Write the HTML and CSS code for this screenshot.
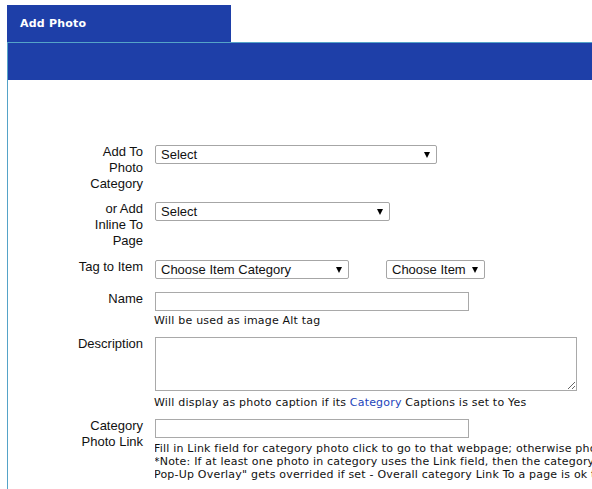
FILE: index.html
```html
<!DOCTYPE html>
<html>
<head>
<meta charset="utf-8">
<title>Add Photo</title>
<link rel="stylesheet" href="styles.css">
</head>
<body>
<div class="header">
  <div class="tab">Add Photo</div>
</div>
<div class="panel">
  <div class="bar"></div>
  <form class="form">
    <div class="row r1">
      <label class="label">Add To Photo Category</label>
      <div class="field">
        <div class="select w282"><span>Select</span><i class="arrow"></i></div>
      </div>
    </div>
    <div class="row r2">
      <label class="label">or Add Inline To Page</label>
      <div class="field">
        <div class="select w235"><span>Select</span><i class="arrow"></i></div>
      </div>
    </div>
    <div class="row r3">
      <label class="label">Tag to Item</label>
      <div class="field pair">
        <div class="select w194"><span>Choose Item Category</span><i class="arrow"></i></div>
        <div class="select w99"><span>Choose Item</span><i class="arrow"></i></div>
      </div>
    </div>
    <div class="row r4">
      <label class="label">Name</label>
      <div class="field">
        <input class="text" type="text">
        <div class="hint">Will be used as image Alt tag</div>
      </div>
    </div>
    <div class="row r5">
      <label class="label">Description</label>
      <div class="field">
        <textarea class="area"></textarea>
        <div class="hint h5">Will display as photo caption if its <a class="link" href="#">Category</a> Captions is set to Yes</div>
      </div>
    </div>
    <div class="row r6">
      <label class="label">Category Photo Link</label>
      <div class="field clip">
        <input class="text" type="text">
        <div class="hint long">Fill in Link field for category photo click to go to that webpage; otherwise photo opens in Pop-Up Overlay.<br>*Note: If at least one photo in category uses the Link field, then the category "Link To" setting of<br>Pop-Up Overlay" gets overrided if set - Overall category Link To a page is ok to use.</div>
      </div>
    </div>
  </form>
</div>
</body>
</html>
```
FILE: styles.css
```css
html, body {
  margin: 0;
  padding: 0;
  background: #ffffff;
  overflow: hidden;
}
body {
  width: 592px;
  height: 489px;
  font-family: "Liberation Sans", Arial, sans-serif;
  color: #111;
}
.header {
  padding-top: 5px;
  margin-left: 7px;
}
.tab {
  width: 211px;
  height: 37px;
  padding-left: 13px;
  background: #1e3fa8;
  color: #ffffff;
  font-family: "DejaVu Sans", Verdana, sans-serif;
  font-weight: bold;
  font-size: 11px;
  letter-spacing: 0.2px;
  line-height: 37px;
}
.panel {
  margin-left: 7px;
  border-left: 1px solid #55a3c8;
  border-top: 1px solid #55a3c8;
  height: 450px;
}
.bar {
  height: 37px;
  background: #1e3fa8;
}
.form {
  margin: 0;
  padding: 64px 0 0 69px;
}
.row {
  display: grid;
  grid-template-columns: 66px auto;
  column-gap: 12px;
  align-items: start;
}
.r2 { margin-top: 9px; }
.r3 { margin-top: 10px; }
.r4 { margin-top: 12px; }
.r5 { margin-top: 9px; }
.r6 { margin-top: 9px; }
.label {
  font-size: 13px;
  line-height: 16px;
  text-align: right;
  color: #111;
}
.field {
  padding-top: 1px;
  min-width: 0;
}
.clip {
  overflow: hidden;
}
.pair {
  display: flex;
  gap: 37px;
}
.select {
  position: relative;
  box-sizing: border-box;
  height: 19px;
  border: 1px solid #a6a6a6;
  border-radius: 2px;
  background: #fff;
  font-size: 13px;
  line-height: 17px;
  padding-left: 5px;
  white-space: nowrap;
}
.w282 { width: 282px; }
.w235 { width: 235px; }
.w194 { width: 194px; }
.w99 { width: 99px; }
.arrow {
  position: absolute;
  right: 6px;
  top: 6px;
  width: 0;
  height: 0;
  border-left: 3.5px solid transparent;
  border-right: 3.5px solid transparent;
  border-top: 6px solid #000;
}
.text {
  display: block;
  box-sizing: border-box;
  width: 314px;
  height: 19px;
  margin: 0;
  border: 1px solid #a9a9a9;
  padding: 0 2px;
  font-size: 13px;
}
.area {
  display: block;
  box-sizing: border-box;
  width: 422px;
  height: 54px;
  margin: 0;
  border: 1px solid #a9a9a9;
  padding: 2px;
  resize: both;
}
.hint {
  font-family: "DejaVu Sans", Verdana, sans-serif;
  font-size: 11px;
  letter-spacing: 0.2px;
  line-height: 13px;
  color: #111;
  margin-top: 3px;
  margin-left: -1px;
  white-space: nowrap;
}
.h5 { margin-top: 5px; }
.long { margin-top: 4px; }
.link {
  color: #2244bb;
  text-decoration: none;
}
```
